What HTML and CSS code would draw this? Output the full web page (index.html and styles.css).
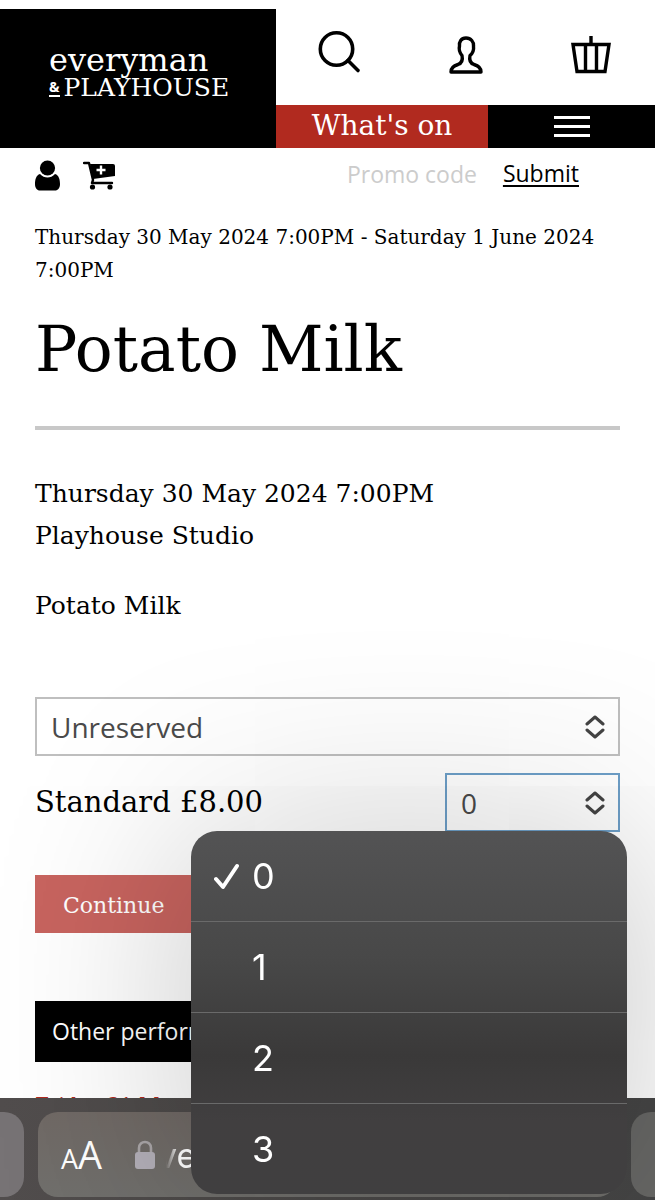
FILE: index.html
```html
<!DOCTYPE html>
<html lang="en">
<head>
<meta charset="utf-8">
<meta name="viewport" content="width=device-width, initial-scale=1">
<title>Potato Milk</title>
<link rel="stylesheet" href="styles.css">
</head>
<body>
<header class="site-header">
  <a class="logo" href="#">
    <span class="logo-top">everyman</span>
    <span class="logo-bottom"><span class="logo-amp">&amp;</span>PLAYHOUSE</span>
  </a>
  <div class="header-side">
    <nav class="icon-row" aria-label="Account">
      <a href="#" aria-label="Search"><svg width="44" height="48" viewBox="0 0 44 48" fill="none" stroke="#000" stroke-width="3.6" stroke-linecap="round"><circle cx="19.500" cy="18" r="16.200"/><path d="M31 29.500L41 39.500"/></svg></a>
      <a href="#" aria-label="My account"><svg width="34" height="40" viewBox="0 0 34 40" fill="none" stroke="#000" stroke-width="3.4" stroke-linejoin="round"><path d="M17 3C12 3 10 7 10.500 11C9.500 15 11 18 13 20.500C14 25 13 28 9 29.500C4 31 2 33 2 37H32C32 33 30 31 25 29.500C21 28 20 25 21 20.500C24 18 25 15 24.500 11C25 7 22 3 17 3Z"/></svg></a>
      <a href="#" aria-label="Basket"><svg width="40" height="40" viewBox="0 0 40 40" fill="none" stroke="#000" stroke-width="3.400"><path d="M20 1V10M2 9.500H38L34 36.500H6ZM14.500 10V36M25.500 10V36"/></svg></a>
    </nav>
    <div class="menu-row">
      <a class="whats-on" href="#">What's on</a>
      <button class="menu-button" type="button" aria-label="Menu"><span></span><span></span><span></span></button>
    </div>
  </div>
</header>

<form class="toolbar">
  <a href="#" aria-label="Profile"><svg width="26" height="32" viewBox="0 0 26 32"><circle cx="12.500" cy="8" r="7.600"/><path d="M5 14C7 16.500 10 17.500 12.500 17.500S18 16.500 20 14C24 15 25 20 25 24C25 28 23 30.500 20 30.500H5C2 30.500 0 28 0 24C0 20 1 15 5 14Z"/></svg></a>
  <a href="#" aria-label="Add to cart"><svg width="33" height="30" viewBox="0 0 33 30"><path d="M1 2H6L10 19L9 22H29" fill="none" stroke="#000" stroke-width="2.400" stroke-linecap="round" stroke-linejoin="round"/><path d="M7 3H30Q32 3 32 5V15L10 18Z"/><path d="M18 4.500V13.500M13.500 9H22.500" stroke="#fff" stroke-width="2.400"/><circle cx="9.500" cy="26" r="2.600"/><circle cx="27" cy="26" r="2.600"/></svg></a>
  <input class="promo" type="text" placeholder="Promo code" aria-label="Promo code">
  <button class="submit" type="submit">Submit</button>
</form>

<main class="event">
  <p class="dates">Thursday 30 May 2024 7:00PM - Saturday 1 June 2024 7:00PM</p>
  <h1>Potato Milk</h1>
  <hr>
  <p class="details">Thursday 30 May 2024 7:00PM<br>Playhouse Studio</p>
  <p class="details show">Potato Milk</p>

  <form class="booking">
    <div class="select-box">
      <select aria-label="Seating area"><option>Unreserved</option></select>
      <svg class="chevrons" width="20" height="24" viewBox="0 0 20 24"><path d="M2 9L10 2L18 9M2 15L10 22L18 15"/></svg>
    </div>
    <div class="price-row">
      <label class="price" for="quantity">Standard £8.00</label>
      <div class="select-box quantity">
        <select id="quantity"><option>0</option><option>1</option><option>2</option><option>3</option></select>
        <svg class="chevrons" width="20" height="24" viewBox="0 0 20 24"><path d="M2 9L10 2L18 9M2 15L10 22L18 15"/></svg>
        <div class="picker">
          <button type="button"><svg width="28" height="28" viewBox="0 0 28 28"><path d="M2 17L9 25L23 4" fill="none" stroke="#fff" stroke-width="4" stroke-linecap="round" stroke-linejoin="round"/></svg><span>0</span></button>
          <button type="button"><span>1</span></button>
          <button type="button"><span>2</span></button>
          <button type="button"><span>3</span></button>
        </div>
      </div>
    </div>
    <button class="continue" type="submit">Continue</button>
  </form>

  <h2 class="other">Other performances</h2>
  <a class="other-date" href="#">Friday 31 May</a>
</main>

<footer class="browser-bar">
  <div class="tab tab-left"></div>
  <div class="address">
    <button class="text-size" type="button" aria-label="Text size"><small>A</small>A</button>
    <svg width="20" height="29" viewBox="0 0 20 29"><path d="M4 13V8C4 0 16 0 16 8V13" fill="none" stroke="#aaa6a8" stroke-width="2.600"/><rect y="12" width="20" height="17" rx="3" fill="#b3afb8"/></svg>
    <span class="url">ve</span>
  </div>
  <div class="tab tab-right"></div>
</footer>
</body>
</html>
```
FILE: styles.css
```css
* { box-sizing: border-box; }

body {
  margin: 0;
  height: 100vh;
  overflow: hidden;
  padding-top: 9px;
  background: #fff;
  color: #000;
  font-family: "DejaVu Serif", serif;
}

a { color: inherit; text-decoration: none; }
svg { display: block; }
p, h1, h2 { margin: 0; font-weight: 400; }
button { border: 0; padding: 0; background: none; color: inherit; font: inherit; }

.site-header { display: grid; grid-template-columns: 276fr 379fr; }

.logo {
  display: flex;
  flex-direction: column;
  justify-content: center;
  padding: 0 0 12px 49px;
  background: #000;
  color: #fff;
}
.logo-top { font-size: 32px; line-height: 30px; }
.logo-bottom { display: flex; align-items: center; gap: 4px; font-size: 25px; line-height: 26px; }
.logo-amp { border-bottom: 2px solid #fff; font: bold 14px/16px "Open Sans", sans-serif; }

.icon-row {
  display: flex;
  justify-content: space-between;
  align-items: center;
  height: 96px;
  padding: 0 44px 4px 41px;
}
.menu-row { display: grid; grid-template-columns: 212fr 167fr; height: 43px; }
.whats-on {
  background: #b12a1f;
  color: #fff;
  font-size: 28px;
  line-height: 41px;
  text-align: center;
}
.menu-button {
  display: flex;
  flex-direction: column;
  justify-content: center;
  align-items: center;
  gap: 6px;
  background: #000;
}
.menu-button span { width: 36px; height: 3px; background: #fff; }

.toolbar {
  display: flex;
  align-items: center;
  gap: 22px;
  height: 56px;
  padding: 0 76px 0 35px;
  font-family: "Open Sans", sans-serif;
}
.promo {
  width: 134px;
  margin-left: auto;
  padding: 0 0 4px;
  border: 0;
  outline: 0;
  background: none;
  font: 23px/28px "Open Sans", sans-serif;
}
.promo::placeholder { color: #ccc; }
.submit { padding-bottom: 6px; font-size: 23px; line-height: 28px; text-decoration: underline; text-decoration-thickness: 2px; text-underline-offset: 3px; }

.event { padding: 17px 35px 0; }
.dates { font-size: 20px; line-height: 33px; }
h1 { margin-top: 23px; font-size: 63px; line-height: 80px; }
hr { height: 4px; margin: 36px 0 43px; border: 0; background: #c8c8c8; }
.details { font-size: 25px; line-height: 42px; }
.show { margin-top: 28px; }

.booking { margin-top: 70px; }
.select-box { position: relative; height: 59px; }
.select-box select {
  width: 100%;
  height: 100%;
  padding: 0 14px;
  border: 2px solid #bfbfbf;
  border-radius: 0;
  outline: 0;
  appearance: none;
  background: none;
  color: #4a4a4a;
  font: 28px/36px "Open Sans", sans-serif;
}
.chevrons {
  position: absolute;
  top: 18px;
  right: 15px;
  fill: none;
  stroke: #444;
  stroke-width: 3;
  stroke-linecap: round;
  stroke-linejoin: round;
  pointer-events: none;
}
.price-row { display: flex; justify-content: space-between; margin-top: 17px; }
.price { font-size: 29px; line-height: 59px; }
.quantity { width: 175px; }
.quantity select { border-color: #6d9fc8; }

.picker {
  position: absolute;
  z-index: 3;
  top: 58px;
  right: -7px;
  width: 436px;
  overflow: hidden;
  border-radius: 26px;
  background: linear-gradient(#535354, #484848 35%, #3a3939 62%, #413f40 80%, #403f40);
  box-shadow: 0 0 200px rgba(0, 0, 0, 0.24);
  color: #fff;
  font: 36px/44px Inter, sans-serif;
}
.picker button {
  display: grid;
  grid-template-columns: 28px 1fr;
  gap: 10px;
  align-items: center;
  width: 100%;
  height: 91px;
  padding: 0 23px;
  text-align: left;
}
.picker button:first-child { height: 90px; }
.picker button + button { border-top: 1px solid #6a6a6a; }
.picker span { grid-column: 2; }

.continue {
  display: block;
  width: 200px;
  height: 58px;
  margin-top: 43px;
  padding: 3px 0 0 28px;
  background: #c8645f;
  color: #fff;
  font-size: 22px;
  text-align: left;
}
.other {
  margin-top: 68px;
  padding-left: 17px;
  background: #000;
  color: #fff;
  font: 23px/61px "Open Sans", sans-serif;
}
.other-date { display: block; margin-top: 27px; color: #b12a1f; font-size: 20px; line-height: 33px; }

.browser-bar {
  position: fixed;
  z-index: 1;
  right: 0;
  bottom: 0;
  left: 0;
  display: grid;
  grid-template-columns: 24px 1fr 24px;
  gap: 14px;
  height: 102px;
  padding: 14px 0 3px;
  background: linear-gradient(90deg, #514d4d, #4d4a49 30%, #464646);
}
.tab { background: #777375; }
.tab-left { border-radius: 0 20px 20px 0; }
.tab-right { border-radius: 20px 0 0 20px; background: #686866; }
.address {
  display: flex;
  align-items: center;
  padding-left: 23px;
  border-radius: 20px;
  background: linear-gradient(#706965, #706f6c);
  color: #fff;
  font: 34px/40px Inter, sans-serif;
}
.text-size { display: flex; align-items: baseline; margin-right: 33px; padding-top: 4px; font-size: 38px; font-family: "Open Sans", sans-serif; }
.text-size small { font-size: 27px; }
.url { margin-left: 3px; padding-top: 3px; mask-image: linear-gradient(90deg, transparent 8px, #000 20px); }
```
